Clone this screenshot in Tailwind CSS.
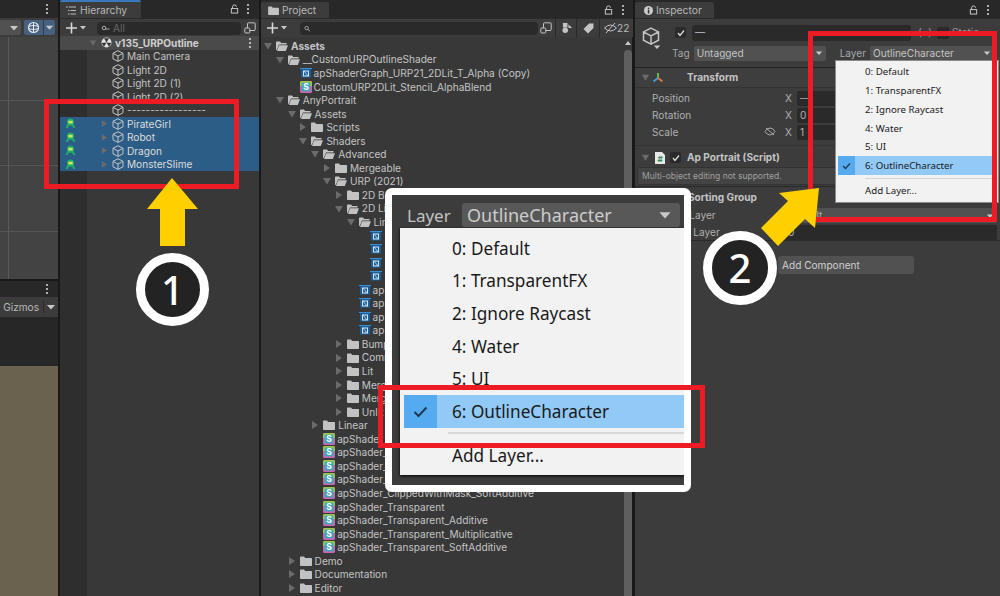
<!DOCTYPE html>
<html lang="en">
<head>
  <meta charset="UTF-8" />
  <title>Unity Layer</title>
  <script src="https://cdn.jsdelivr.net/npm/@tailwindcss/browser@4"></script>
</head>
<body class="bg-[#191919]">
<svg class="hidden">
  <symbol id="cube" viewBox="0 0 12 12"><path d="M6 .7 11 3.3V8.8L6 11.4 1 8.8V3.3ZM1 3.3 6 6 11 3.3M6 6V11.4" fill="none" stroke="#c4c4c4" stroke-width="1"/></symbol>
  <symbol id="folder" viewBox="0 0 12 10"><path d="M0 1.2Q0 .5.7.5H4L5.2 2H11.3Q12 2 12 2.7V9.3Q12 10 11.3 10H.7Q0 10 0 9.3Z" fill="#c2c2c2"/></symbol>
  <symbol id="open" viewBox="0 0 12 10"><path d="M0 1.2Q0 .5.7.5H4L5.2 2H10.5V3.5H3L1 8.5 0 9.3Z" fill="#c2c2c2"/><path d="M3.2 4.2H12L9.8 10H.9Z" fill="#c2c2c2"/></symbol>
  <symbol id="right" viewBox="0 0 10 10"><path d="M2 1 8 5 2 9Z" fill="#6b6b6b"/></symbol>
  <symbol id="down" viewBox="0 0 10 10"><path d="M1 2H9L5 8.5Z" fill="#6b6b6b"/></symbol>
  <symbol id="caret" viewBox="0 0 10 10"><path d="M1 3H9L5 7.5Z" fill="#c8c8c8"/></symbol>
  <symbol id="shader" viewBox="0 0 12 12"><rect width="12" height="12" rx="1.5" fill="#cf63b0"/><path d="M0 1.5Q0 0 1.5 0H10.5Q12 0 12 1.5V5H0Z" fill="#9fc64a"/><rect x="1.6" y="1.6" width="8.8" height="8.8" fill="#3fa7b8"/><text x="6" y="9.3" font-size="8.5" font-weight="700" text-anchor="middle" fill="#fff" font-family="Inter">S</text></symbol>
  <symbol id="graph" viewBox="0 0 12 12"><rect x="1" y="1.5" width="10" height="9" fill="#1a5f9c"/><rect y="1" width="12" height="1" fill="#3b8ed0"/><rect x="3.5" y="4" width="5" height="5" fill="none" stroke="#d6e6f4" stroke-width="1"/><path d="M4 4 8 9" stroke="#d6e6f4" stroke-width=".8"/></symbol>
  <symbol id="green" viewBox="0 0 10 10"><path d="M2 3Q2 .5 5 .5T8 3V6L9.5 9H7.5L6.5 7H3.5L2.5 9H.5L2 6Z" fill="#1fae6a"/><rect x="3" y="2.5" width="4" height="2.5" fill="#c8e85a"/></symbol>
  <symbol id="lock" viewBox="0 0 10 11"><path d="M2.8 5V3Q2.8 1 5 1T7.2 3" fill="none" stroke="#c4c4c4" stroke-width="1.1"/><rect x="1.5" y="5" width="7" height="5" fill="none" stroke="#c4c4c4" stroke-width="1.1"/></symbol>
  <symbol id="dots" viewBox="0 0 4 12"><circle cx="2" cy="2" r="1.1" fill="#d0d0d0"/><circle cx="2" cy="6" r="1.1" fill="#d0d0d0"/><circle cx="2" cy="10" r="1.1" fill="#d0d0d0"/></symbol>
  <symbol id="plus" viewBox="0 0 20 12"><path d="M5.5 .5V11.5M0 6H11" stroke="#d8d8d8" stroke-width="1.6"/><path d="M14 4H20L17 7.5Z" fill="#c8c8c8"/></symbol>
  <symbol id="picker" viewBox="0 0 12 12"><rect x="3.5" y=".8" width="7.7" height="7.7" rx="1" fill="none" stroke="#c4c4c4"/><rect x=".8" y="6" width="5" height="5" rx="1" fill="#3c3c3c" stroke="#c4c4c4"/></symbol>
</svg>

<main class="relative w-[1000px] h-[596px] overflow-hidden flex gap-[2px] text-[10.1px] leading-none text-[#c4c4c4] font-[family-name:Inter,sans-serif]">

  <!-- scene / game -->
  <section class="w-[58px] flex flex-col">
    <div class="h-[18px] bg-[#282828] flex justify-end items-center pr-[9px]"><svg class="w-[4px] h-[12px]"><use href="#dots"/></svg></div>
    <div class="h-[19px] bg-[#3c3c3c] flex items-center">
      <div class="w-[21px] h-[15px] bg-[#515151] flex items-center justify-end pr-[2px] rounded-r-[2px] mr-[3px]"><svg class="w-[10px] h-[10px]"><use href="#caret"/></svg></div>
      <div class="w-[19px] h-[15px] bg-[#46607f] flex items-center justify-center rounded-l-[2px]"><svg class="w-[13px] h-[13px]" viewBox="0 0 13 13"><circle cx="6.5" cy="6.5" r="5" fill="none" stroke="#e6e6e6" stroke-width="1.2"/><ellipse cx="6.5" cy="6.5" rx="5" ry="2" fill="none" stroke="#e6e6e6"/><path d="M6.5 1.5V11.5" stroke="#e6e6e6"/></svg></div>
      <div class="w-[11px] h-[15px] bg-[#46607f] ml-[1px] flex items-center justify-center rounded-r-[2px]"><svg class="w-[9px] h-[9px]"><use href="#caret"/></svg></div>
    </div>
    <div class="h-[242px] bg-[#434343] bg-[linear-gradient(#5a5a5a,#5a5a5a),linear-gradient(#565656,#565656),linear-gradient(#565656,#565656),linear-gradient(#565656,#565656)] bg-no-repeat bg-[size:1px_100%,100%_1px,100%_1px,100%_1px] bg-[position:8px_0,0_63px,0_128px,0_194px]"></div>
    <div class="h-[2px] bg-[#191919]"></div>
    <div class="h-[16px] bg-[#282828] flex justify-end items-center pr-[9px]"><svg class="w-[4px] h-[12px]"><use href="#dots"/></svg></div>
    <div class="h-[20px] bg-[#3c3c3c] flex items-center justify-end text-[#b8b8b8]">
      <span>Gizmos</span><span class="w-px h-[12px] bg-[#2a2a2a] ml-[4px]"></span><svg class="w-[10px] h-[10px] mx-[2px]"><use href="#caret"/></svg>
    </div>
    <div class="h-[49px] bg-[#272727]"></div>
    <div class="flex-1 bg-[#6a624f]"></div>
  </section>

  <!-- hierarchy -->
  <section class="w-[199px] flex flex-col bg-[#383838]">
    <div class="h-[18px] bg-[#282828] flex items-stretch">
      <div class="w-[81px] bg-[#3c3c3c] border-t-2 border-[#3a79bb] flex items-center pl-[6px] gap-[4px] text-[#b8b8b8] text-[10.3px] rounded-t-[2px]">
        <svg class="w-[10px] h-[9px]" viewBox="0 0 10 9"><path d="M0 1H2M3 1H10M2 4.5H3.5M4.5 4.5H10M2 8H3.5M4.5 8H10" stroke="#bbb"/></svg><span>Hierarchy</span>
      </div>
      <div class="flex-1 flex items-center justify-end gap-[7px] pr-[9px]"><svg class="w-[9px] h-[10px]"><use href="#lock"/></svg><svg class="w-[4px] h-[12px]"><use href="#dots"/></svg></div>
    </div>
    <div class="h-[19px] bg-[#3c3c3c] flex items-center pl-[6px] border-t border-[#2a2a2a]">
      <svg class="w-[20px] h-[12px]"><use href="#plus"/></svg>
      <div class="w-[144px] h-[13px] ml-[11px] rounded-[4px] bg-[#2a2a2a] flex items-center pl-[4px] gap-[3px] text-[#666]"><svg class="w-[9px] h-[7px]" viewBox="0 0 8 7"><circle cx="2.5" cy="3" r="1.8" fill="none" stroke="#aaa"/><path d="M4 4H8" stroke="#aaa"/></svg><span>All</span></div>
      <svg class="w-[12px] h-[12px] ml-[3px]"><use href="#picker"/></svg>
    </div>
    <div class="flex-1 -mt-[1px] bg-[linear-gradient(90deg,#2e2e2e_27px,#383838_27px)] [&>div]:h-[13.5px] [&>div]:flex [&>div]:items-center">
      <div class="bg-[#4a4a4a] pl-[29px] font-bold text-[#cfcfcf]"><svg class="w-[8px] h-[8px] mr-[4px]"><use href="#down"/></svg><svg class="w-[11px] h-[11px] mr-[3px]" viewBox="0 0 11 11"><circle cx="5.5" cy="5.5" r="5" fill="#e0e0e0"/><path d="M5.5 5.5 3 1.2H8ZM5.5 5.5 .7 6 3 9.8ZM5.5 5.5 10.3 6 8 9.8Z" fill="#333"/></svg><span>v135_URPOutline</span><svg class="w-[4px] h-[12px] ml-auto mr-[7px]"><use href="#dots"/></svg></div>
      <div class="pl-[52px]"><svg class="w-[12px] h-[12px] mr-[3px]"><use href="#cube"/></svg><span>Main Camera</span></div>
      <div class="pl-[52px]"><svg class="w-[12px] h-[12px] mr-[3px]"><use href="#cube"/></svg><span>Light 2D</span></div>
      <div class="pl-[52px]"><svg class="w-[12px] h-[12px] mr-[3px]"><use href="#cube"/></svg><span>Light 2D (1)</span></div>
      <div class="pl-[52px]"><svg class="w-[12px] h-[12px] mr-[3px]"><use href="#cube"/></svg><span>Light 2D (2)</span></div>
      <div class="pl-[52px]"><svg class="w-[12px] h-[12px] mr-[3px]"><use href="#cube"/></svg><span>-----------------</span></div>
      <div class="pl-[5px] bg-[#2c5d87] text-[#dcdcdc]"><svg class="w-[11px] h-[11px] mr-[24px]"><use href="#green"/></svg><svg class="w-[9px] h-[9px]"><use href="#right"/></svg><svg class="w-[12px] h-[12px] mx-[3px]"><use href="#cube"/></svg><span>PirateGirl</span></div>
      <div class="pl-[5px] bg-[#2c5d87] text-[#dcdcdc]"><svg class="w-[11px] h-[11px] mr-[24px]"><use href="#green"/></svg><svg class="w-[9px] h-[9px]"><use href="#right"/></svg><svg class="w-[12px] h-[12px] mx-[3px]"><use href="#cube"/></svg><span>Robot</span></div>
      <div class="pl-[5px] bg-[#2c5d87] text-[#dcdcdc]"><svg class="w-[11px] h-[11px] mr-[24px]"><use href="#green"/></svg><svg class="w-[9px] h-[9px]"><use href="#right"/></svg><svg class="w-[12px] h-[12px] mx-[3px]"><use href="#cube"/></svg><span>Dragon</span></div>
      <div class="pl-[5px] bg-[#2c5d87] text-[#dcdcdc]"><svg class="w-[11px] h-[11px] mr-[24px]"><use href="#green"/></svg><svg class="w-[9px] h-[9px]"><use href="#right"/></svg><svg class="w-[12px] h-[12px] mx-[3px]"><use href="#cube"/></svg><span>MonsterSlime</span></div>
    </div>
  </section>

  <!-- project -->
  <section class="w-[372px] flex flex-col bg-[#383838]">
    <div class="h-[18px] bg-[#282828] flex items-stretch">
      <div class="w-[68px] mt-[2px] bg-[#3c3c3c] flex items-center pl-[7px] gap-[3px] text-[#b8b8b8] text-[10.3px] rounded-t-[2px]"><svg class="w-[11px] h-[9px]"><use href="#folder"/></svg><span>Project</span></div>
      <div class="flex-1 flex items-center justify-end gap-[8px] pr-[8px] mt-[2px]"><svg class="w-[9px] h-[10px]"><use href="#lock"/></svg><svg class="w-[4px] h-[12px]"><use href="#dots"/></svg></div>
    </div>
    <div class="h-[19px] bg-[#3c3c3c] flex items-center pl-[6px] border-t border-[#2a2a2a]">
      <svg class="w-[20px] h-[12px]"><use href="#plus"/></svg>
      <div class="w-[238px] h-[13px] ml-[13px] rounded-[4px] bg-[#2a2a2a] flex items-center pl-[4px]"><svg class="w-[7px] h-[7px]" viewBox="0 0 8 7"><circle cx="3" cy="3" r="2" fill="none" stroke="#aaa"/><path d="M4.5 4.5 7 6.5" stroke="#aaa"/></svg></div>
      <svg class="w-[12px] h-[12px] ml-[2px]"><use href="#picker"/></svg>
      <div class="w-px h-[18px] bg-[#2a2a2a] ml-[3px]"></div>
      <svg class="w-[11px] h-[12px] ml-[6px] mr-[3px]" viewBox="0 0 12 12"><circle cx="3.5" cy="8.5" r="3" fill="#c4c4c4"/><rect x="1" y=".5" width="5" height="5" fill="#c4c4c4"/><path d="M7 2 11 6H7Z" fill="#c4c4c4"/></svg>
      <div class="w-px h-[18px] bg-[#2a2a2a]"></div>
      <svg class="w-[11px] h-[11px] ml-[6px] mr-[5px]" viewBox="0 0 11 11"><path d="M10.5 .5V5L5 10.5.5 6 6 .5Z" fill="#c4c4c4"/></svg>
      <div class="w-px h-[18px] bg-[#2a2a2a]"></div>
      <svg class="w-[13px] h-[10px] ml-[4px]" viewBox="0 0 13 10"><path d="M.5 5Q6.5-1 12.5 5 6.5 11 .5 5Z" fill="none" stroke="#c4c4c4"/><path d="M2 10 11 0" stroke="#c4c4c4"/></svg>
      <span class="text-[#b8b8b8]">22</span>
    </div>
    <div class="flex-1 flex min-h-0">
      <div class="flex-1 pt-[2.2px] overflow-hidden whitespace-nowrap [&>div]:h-[13.55px] [&>div]:flex [&>div]:items-center [&_.a]:w-[10px] [&_.a]:h-[10px] [&_.a]:mr-[3px] [&_.f]:w-[12px] [&_.f]:h-[10px] [&_.f]:mr-[3px] [&_.i]:w-[12px] [&_.i]:h-[12px] [&_.i]:mr-[2px]">
        <div class="pl-[2px] font-bold"><svg class="a"><use href="#down"/></svg><svg class="f"><use href="#open"/></svg><span>Assets</span></div>
        <div class="pl-[13.8px]"><svg class="a"><use href="#down"/></svg><svg class="f"><use href="#open"/></svg><span>__CustomURPOutlineShader</span></div>
        <div class="pl-[38.6px]"><svg class="i"><use href="#graph"/></svg><span>apShaderGraph_URP21_2DLit_T_Alpha (Copy)</span></div>
        <div class="pl-[38.6px]"><svg class="i"><use href="#shader"/></svg><span>CustomURP2DLit_Stencil_AlphaBlend</span></div>
        <div class="pl-[13.8px]"><svg class="a"><use href="#down"/></svg><svg class="f"><use href="#open"/></svg><span>AnyPortrait</span></div>
        <div class="pl-[25.6px]"><svg class="a"><use href="#down"/></svg><svg class="f"><use href="#open"/></svg><span>Assets</span></div>
        <div class="pl-[37.4px]"><svg class="a"><use href="#right"/></svg><svg class="f"><use href="#folder"/></svg><span>Scripts</span></div>
        <div class="pl-[37.4px]"><svg class="a"><use href="#down"/></svg><svg class="f"><use href="#open"/></svg><span>Shaders</span></div>
        <div class="pl-[49.2px]"><svg class="a"><use href="#down"/></svg><svg class="f"><use href="#open"/></svg><span>Advanced</span></div>
        <div class="pl-[61px]"><svg class="a"><use href="#right"/></svg><svg class="f"><use href="#folder"/></svg><span>Mergeable</span></div>
        <div class="pl-[61px]"><svg class="a"><use href="#down"/></svg><svg class="f"><use href="#open"/></svg><span>URP (2021)</span></div>
        <div class="pl-[72.8px]"><svg class="a"><use href="#right"/></svg><svg class="f"><use href="#folder"/></svg><span>2D Basic</span></div>
        <div class="pl-[72.8px]"><svg class="a"><use href="#down"/></svg><svg class="f"><use href="#open"/></svg><span>2D Lit</span></div>
        <div class="pl-[84.6px]"><svg class="a"><use href="#down"/></svg><svg class="f"><use href="#open"/></svg><span>Linear</span></div>
        <div class="pl-[109.4px]"><svg class="i"><use href="#graph"/></svg></div>
        <div class="pl-[109.4px]"><svg class="i"><use href="#graph"/></svg></div>
        <div class="pl-[109.4px]"><svg class="i"><use href="#graph"/></svg></div>
        <div class="pl-[109.4px]"><svg class="i"><use href="#graph"/></svg></div>
        <div class="pl-[97.6px]"><svg class="i"><use href="#graph"/></svg><span>ap</span></div>
        <div class="pl-[97.6px]"><svg class="i"><use href="#graph"/></svg><span>ap</span></div>
        <div class="pl-[97.6px]"><svg class="i"><use href="#graph"/></svg><span>ap</span></div>
        <div class="pl-[97.6px]"><svg class="i"><use href="#graph"/></svg><span>ap</span></div>
        <div class="pl-[72.8px]"><svg class="a"><use href="#right"/></svg><svg class="f"><use href="#folder"/></svg><span>Bump</span></div>
        <div class="pl-[72.8px]"><svg class="a"><use href="#right"/></svg><svg class="f"><use href="#folder"/></svg><span>Common</span></div>
        <div class="pl-[72.8px]"><svg class="a"><use href="#right"/></svg><svg class="f"><use href="#folder"/></svg><span>Lit</span></div>
        <div class="pl-[72.8px]"><svg class="a"><use href="#right"/></svg><svg class="f"><use href="#folder"/></svg><span>Mergeable</span></div>
        <div class="pl-[72.8px]"><svg class="a"><use href="#right"/></svg><svg class="f"><use href="#folder"/></svg><span>Mergeable</span></div>
        <div class="pl-[72.8px]"><svg class="a"><use href="#right"/></svg><svg class="f"><use href="#folder"/></svg><span>Unlit</span></div>
        <div class="pl-[49.2px]"><svg class="a"><use href="#right"/></svg><svg class="f"><use href="#folder"/></svg><span>Linear</span></div>
        <div class="pl-[62.2px]"><svg class="i"><use href="#shader"/></svg><span>apShader</span></div>
        <div class="pl-[62.2px]"><svg class="i"><use href="#shader"/></svg><span>apShader_Additive</span></div>
        <div class="pl-[62.2px]"><svg class="i"><use href="#shader"/></svg><span>apShader_Clipped</span></div>
        <div class="pl-[62.2px]"><svg class="i"><use href="#shader"/></svg><span>apShader_Clipped</span></div>
        <div class="pl-[62.2px]"><svg class="i"><use href="#shader"/></svg><span>apShader_ClippedWithMask_SoftAdditive</span></div>
        <div class="pl-[62.2px]"><svg class="i"><use href="#shader"/></svg><span>apShader_Transparent</span></div>
        <div class="pl-[62.2px]"><svg class="i"><use href="#shader"/></svg><span>apShader_Transparent_Additive</span></div>
        <div class="pl-[62.2px]"><svg class="i"><use href="#shader"/></svg><span>apShader_Transparent_Multiplicative</span></div>
        <div class="pl-[62.2px]"><svg class="i"><use href="#shader"/></svg><span>apShader_Transparent_SoftAdditive</span></div>
        <div class="pl-[25.6px]"><svg class="a"><use href="#right"/></svg><svg class="f"><use href="#folder"/></svg><span>Demo</span></div>
        <div class="pl-[25.6px]"><svg class="a"><use href="#right"/></svg><svg class="f"><use href="#folder"/></svg><span>Documentation</span></div>
        <div class="pl-[25.6px]"><svg class="a"><use href="#right"/></svg><svg class="f"><use href="#folder"/></svg><span>Editor</span></div>
      </div>
      <div class="w-[9px] flex flex-col items-center border-r border-[#191919]">
        <svg class="w-[8px] h-[8px] mt-[2px] mb-[3px]" viewBox="0 0 8 8"><path d="M1 6H7L4 2Z" fill="#c8c8c8"/></svg>
        <div class="flex-1 w-[8px] bg-[#5f5f5f] rounded-t-[4px]"></div>
      </div>
    </div>
  </section>

  <!-- inspector -->
  <section class="flex-1 flex flex-col bg-[#3c3c3c]">
    <div class="h-[18px] bg-[#282828] flex items-stretch">
      <div class="w-[79px] mt-[2px] bg-[#3c3c3c] flex items-center pl-[9px] gap-[3px] text-[#b8b8b8] text-[10.3px] rounded-t-[2px]"><svg class="w-[9px] h-[9px]" viewBox="0 0 9 9"><circle cx="4.5" cy="4.5" r="4.5" fill="#ccc"/><rect x="3.8" y="3.6" width="1.5" height="4" fill="#333"/><rect x="3.8" y="1.6" width="1.5" height="1.4" fill="#333"/></svg><span>Inspector</span></div>
      <div class="flex-1 flex items-center justify-end gap-[8px] pr-[10px] mt-[2px]"><svg class="w-[9px] h-[10px]"><use href="#lock"/></svg><svg class="w-[4px] h-[12px]"><use href="#dots"/></svg></div>
    </div>
    <div class="h-[49px] border-t border-[#2a2a2a] flex">
      <div class="w-[37px] pl-[7px] pt-[8px] relative">
        <svg class="w-[18px] h-[18px]"><use href="#cube"/></svg>
        <svg class="w-[8px] h-[8px] absolute left-[18px] top-[24px]"><use href="#caret"/></svg>
      </div>
      <div class="flex-1 flex flex-col">
        <div class="flex items-center h-[26px] pt-[1px]">
          <div class="w-[11px] h-[11px] ml-[3px] bg-[#2a2a2a] rounded-[2px] flex items-center justify-center"><svg class="w-[8px] h-[8px]" viewBox="0 0 8 8"><path d="M1 4 3 6.5 7 1.5" fill="none" stroke="#ddd" stroke-width="1.3"/></svg></div>
          <div class="w-[219px] h-[16px] ml-[6px] bg-[#2a2a2a] rounded-[3px] pl-[3px] flex items-center">—</div>
          <span class="ml-[7px] text-[#999]">(+)</span>
          <div class="w-[12px] h-[12px] ml-[5px] bg-[#2a2a2a] rounded-[2px]"></div>
          <span class="ml-[3px] text-[#999]">Static</span>
        </div>
        <div class="flex items-center h-[16px]">
          <span class="text-[#a8a8a8]">Tag</span>
          <div class="w-[132px] h-[15px] ml-[4px] bg-[#515151] rounded-[2px] flex items-center justify-between pl-[3px] pr-[3px]"><span>Untagged</span><svg class="w-[8px] h-[8px]"><use href="#caret"/></svg></div>
          <span class="ml-[14px] text-[#a8a8a8]">Layer</span>
          <div class="w-[124px] h-[15px] ml-[4px] bg-[#515151] rounded-[2px] flex items-center justify-between pl-[3px] pr-[3px]"><span>OutlineCharacter</span><svg class="w-[8px] h-[8px]"><use href="#caret"/></svg></div>
        </div>
      </div>
    </div>
    <div class="h-[20px] flex items-center pl-[6px] border-t border-[#222] font-bold bg-[#3e3e3e]">
      <svg class="w-[9px] h-[9px]"><use href="#down"/></svg>
      <svg class="w-[12px] h-[12px] ml-[2px] mr-[23px]" viewBox="0 0 12 12"><path d="M6 6V1" stroke="#6ac24a" stroke-width="1.8"/><path d="M6 6 1.5 9.5" stroke="#3aa0e8" stroke-width="1.8"/><path d="M6 6 10.5 9.5" stroke="#e8703a" stroke-width="1.8"/></svg>
      <span>Transform</span>
    </div>
    <div class="h-[59px] pl-[17px] border-t border-[#333] border-b [&>div]:h-[17px] [&>div]:flex [&>div]:items-center pt-[2px] text-[#b0b0b0]">
      <div><span class="w-[133px]">Position</span><span>X</span><span class="w-[60px] h-[15px] ml-[5px] bg-[#2a2a2a] rounded-[2px] flex items-center pl-[3px]">—</span></div>
      <div><span class="w-[133px]">Rotation</span><span>X</span><span class="w-[60px] h-[15px] ml-[5px] bg-[#2a2a2a] rounded-[2px] flex items-center pl-[3px]">0</span></div>
      <div><span class="w-[133px] flex justify-end pr-[9px]"><span class="mr-auto">Scale</span><svg class="w-[12px] h-[9px]" viewBox="0 0 12 9"><path d="M1 4.5Q3 1 6 1T11 4.5Q9 8 6 8T1 4.5ZM2 1 10 8" fill="none" stroke="#aaa"/></svg></span><span>X</span><span class="w-[60px] h-[15px] ml-[5px] bg-[#2a2a2a] rounded-[2px] flex items-center pl-[3px]">1</span></div>
    </div>
    <div class="h-[19px] mt-[2px] flex items-center pl-[6px] font-bold">
      <svg class="w-[9px] h-[9px]"><use href="#down"/></svg>
      <svg class="w-[10px] h-[12px] ml-[5px]" viewBox="0 0 10 12"><path d="M0 0H7L10 3V12H0Z" fill="#e8e8e8"/><text x="5" y="9.5" font-size="8" text-anchor="middle" fill="#1d8c4e" font-weight="700">#</text></svg>
      <div class="w-[11px] h-[11px] ml-[5px] bg-[#2a2a2a] rounded-[2px] flex items-center justify-center"><svg class="w-[8px] h-[8px]" viewBox="0 0 8 8"><path d="M1 4 3 6.5 7 1.5" fill="none" stroke="#ddd" stroke-width="1.3"/></svg></div>
      <span class="ml-[6px]">Ap Portrait (Script)</span>
    </div>
    <div class="h-[18px] mx-[2px] bg-[#444] border border-[#333] rounded-[2px] flex items-center pl-[4px] text-[8.5px] text-[#a0a0a0]">Multi-object editing not supported.</div>
    <div class="h-[21px] flex items-center pl-[53px] font-bold mt-[1px] border-t border-[#2a2a2a]"><span>Sorting Group</span></div>
    <div class="h-[17px] flex items-center pl-[17px] text-[#b0b0b0]"><span class="w-[133px]">Sorting Layer</span><div class="flex-1 h-[15px] mr-[3px] bg-[#515151] rounded-[2px] flex items-center justify-between pl-[3px] pr-[3px]"><span>Default</span><svg class="w-[8px] h-[8px]"><use href="#caret"/></svg></div></div>
    <div class="h-[17px] flex items-center pl-[17px] text-[#b0b0b0] border-b border-[#2a2a2a]"><span class="w-[133px]">Order in Layer</span><div class="flex-1 h-[15px] mr-[3px] bg-[#2a2a2a] rounded-[2px] flex items-center pl-[3px]">0</div></div>
    <div class="flex justify-end pr-[86px] mt-[15px]"><div class="w-[136px] h-[18px] bg-[#515151] rounded-[3px] flex items-center pl-[4px] text-[#d0d0d0]">Add Component</div></div>
  </section>

  <!-- inspector layer menu -->
  <div class="absolute left-[835px] top-[60px] w-[164px] h-[143px] bg-[#f2f2f2] border border-[#8a8a8a] pt-[2px] text-[9.7px] text-[#1a1a1a] font-[family-name:'Noto_Sans',sans-serif] [&>div]:h-[18.7px] [&>div]:flex [&>div]:items-center [&>div]:pl-[29px]">
    <div>0: Default</div>
    <div>1: TransparentFX</div>
    <div>2: Ignore Raycast</div>
    <div>4: Water</div>
    <div>5: UI</div>
    <div class="!pl-0 ml-[2px] mr-[1px] bg-[#91c9f7]"><span class="w-[17px] h-full bg-[#55aaf0] flex items-center justify-center mr-[10px]"><svg class="w-[9px] h-[8px]" viewBox="0 0 9 8"><path d="M1 4 3.5 6.5 8 1.5" fill="none" stroke="#1d3a55" stroke-width="1.3"/></svg></span>6: OutlineCharacter</div>
    <p class="h-px bg-[#d4d4d4] ml-[29px] mt-[3px]"></p>
    <div class="mt-[2px]">Add Layer...</div>
  </div>

  <!-- zoomed callout -->
  <div class="absolute left-[385px] top-[188px] w-[306px] h-[304px] border-[7px] border-white rounded-[7px] bg-[#3c3c3c] overflow-hidden font-[family-name:'Noto_Sans',sans-serif]">
    <div class="flex items-center h-[33px] pl-[15px] pt-[7px]">
      <span class="text-[17px] text-[#c2c2c2] w-[55px]">Layer</span>
      <div class="w-[218px] h-[24px] bg-[#585858] rounded-[3px] flex items-center justify-between pl-[5px] pr-[8px] text-[18px] text-[#cccccc]"><span>OutlineCharacter</span><svg class="w-[14px] h-[14px]"><use href="#caret"/></svg></div>
    </div>
    <div class="ml-[8px] h-[247px] bg-[#f2f2f2] shadow-[0_1px_3px_#000] pt-[4px] text-[17.2px] text-[#1a1a1a] [&>div]:h-[32.7px] [&>div]:flex [&>div]:items-center [&>div]:pl-[52px]">
      <div>0: Default</div>
      <div>1: TransparentFX</div>
      <div>2: Ignore Raycast</div>
      <div>4: Water</div>
      <div>5: UI</div>
      <div class="!pl-0 ml-[4px] bg-[#91c9f7]"><span class="w-[33px] h-full bg-[#55aaf0] flex items-center justify-center mr-[15px]"><svg class="w-[15px] h-[12px]" viewBox="0 0 15 12"><path d="M1.5 6 5.5 10 13.5 1.5" fill="none" stroke="#1d3a55" stroke-width="2"/></svg></span>6: OutlineCharacter</div>
      <p class="h-[2px] bg-[#d8d8d8] ml-[48px] mt-[4px]"></p>
      <div class="mt-[5px]">Add Layer...</div>
    </div>
  </div>

  <!-- red highlight boxes -->
  <div class="absolute left-[44px] top-[99px] w-[195px] h-[90px] border-[5px] border-[#ed1c24]"></div>
  <div class="absolute left-[808px] top-[31px] w-[189px] h-[191px] border-[5px] border-[#ed1c24]"></div>
  <div class="absolute left-[378px] top-[385px] w-[327px] h-[63px] border-[5px] border-[#ed1c24]"></div>

  <!-- arrows and numbers -->
  <svg class="absolute left-0 top-0 w-[1000px] h-[596px] pointer-events-none" viewBox="0 0 1000 596">
    <path d="M172 178 198 209H185V246H160V209H147Z" fill="#ffd000"/>
    <path d="M819 188 779 193 788 201 761 228 778 246 805 219 815 228Z" fill="#ffd000"/>
  </svg>
  <div class="absolute left-[136px] top-[253px] w-[73px] h-[73px] rounded-full border-[9px] border-white bg-[#232323] flex items-center justify-center text-[40px] font-medium text-white font-[family-name:'Noto_Sans',sans-serif]">1</div>
  <div class="absolute left-[703px] top-[231px] w-[74px] h-[74px] rounded-full border-[9px] border-white bg-[#232323] flex items-center justify-center text-[40px] font-medium text-white font-[family-name:'Noto_Sans',sans-serif]">2</div>
</main>
</body>
</html>
